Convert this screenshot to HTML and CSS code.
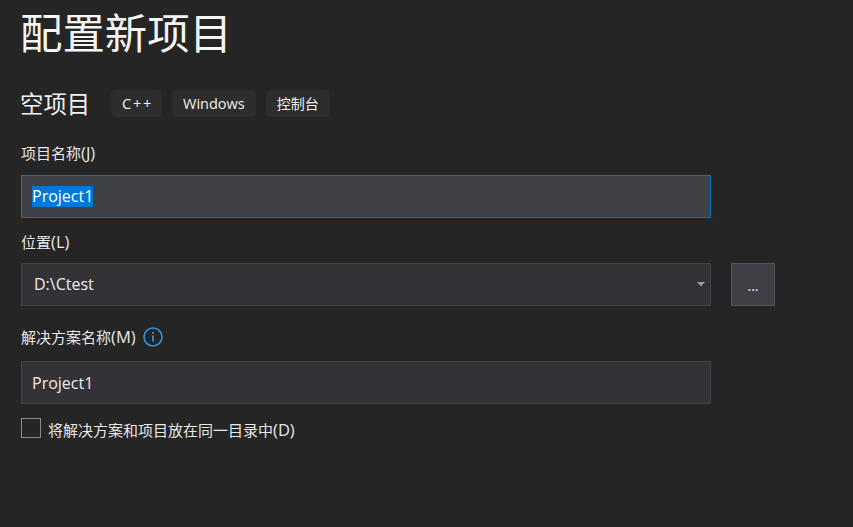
FILE: index.html
```html
<!DOCTYPE html>
<html lang="zh-CN">
<head>
<meta charset="utf-8">
<title>配置新项目</title>
<link rel="stylesheet" href="styles.css">
</head>
<body>
<main class="page">
  <h1 class="title">配置新项目</h1>
  <div class="template">
    <h2 class="template-name">空项目</h2>
    <ul class="tags">
      <li class="tag tag-cpp">C++</li>
      <li class="tag tag-latin">Windows</li>
      <li class="tag">控制台</li>
    </ul>
  </div>
  <div class="label label-name">项目名称<span class="latin">(J)</span></div>
  <div class="field field-focus"><span class="selected">Project1</span></div>
  <div class="label label-location">位置<span class="latin">(L)</span></div>
  <div class="row">
    <div class="field field-combo">
      <span>D:\Ctest</span>
      <svg class="caret" width="8" height="5" viewBox="0 0 8 5"><path d="M0 0h8L4 4.5z" fill="#999"/></svg>
    </div>
    <div class="browse">...</div>
  </div>
  <div class="label label-solution">
    <span>解决方案名称<span class="latin">(M)</span></span>
    <svg class="info" width="20" height="20" viewBox="0 0 20 20" fill="none" stroke="#3392dc">
      <circle cx="10" cy="10" r="9" stroke-width="1.6"/>
      <path d="M10 8.5v6" stroke-width="1.8"/>
      <path d="M10 5v2" stroke-width="1.8"/>
    </svg>
  </div>
  <div class="field"><span>Project1</span></div>
  <label class="check">
    <span class="box"></span>
    <span class="check-text">将解决方案和项目放在同一目录中<span class="latin">(D)</span></span>
  </label>
</main>
</body>
</html>
```
FILE: styles.css
```css
* { box-sizing: border-box; }
html, body { margin: 0; height: 100%; }
body {
  background: #252526;
  color: #f1f1f1;
  font-family: "Open Sans", "Noto Sans CJK SC", sans-serif;
  overflow: hidden;
}
.page { padding: 0 0 0 21px; width: 853px; }
.title {
  margin: 0 0 0 -1px;
  padding-top: 4px;
  height: 60px;
  font-size: 42.4px;
  line-height: 54px;
  font-weight: 400;
  font-family: "Noto Sans CJK SC", sans-serif;
  color: #f5f5f5;
}
.template {
  display: flex;
  align-items: center;
  margin-top: 30px;
  height: 27px;
}
.template-name {
  margin: 0 1px 0 -1px;
  width: 90px;
  font-size: 23.4px;
  font-weight: 400;
  line-height: 27px;
  font-family: "Noto Sans CJK SC", sans-serif;
}
.tags { display: flex; gap: 10px; margin: 0; padding: 0; list-style: none; }
.tag {
  height: 27px;
  padding: 0 11px;
  border-radius: 5px;
  background: #2d2d2e;
  font-size: 14px;
  line-height: 27px;
}
.tag-latin { font-size: 14.5px; }
.tag-cpp { font-size: 14.7px; letter-spacing: 1.7px; padding-right: 9px; width: 51px; }
.label { font-size: 15px; line-height: 20px; color: #e8e8e8; }
.latin { font-size: 16.5px; }
.label-name { margin-top: 26px; }
.label-location { margin-top: 14px; }
.label-solution { margin-top: 21px; display: flex; align-items: center; gap: 7px; }
.field {
  width: 690px;
  height: 43px;
  margin-top: 14px;
  padding: 0 10px;
  display: flex;
  align-items: center;
  background: #333337;
  border: 1px solid #434346;
  font-size: 16px;
  color: #ececec;
}
.field-focus { margin-top: 12px; background: #3f4045; border-color: #0e70c0; }
.selected { background: #0078d7; color: #fff; line-height: 21px; }
.row { display: flex; gap: 20px; margin-top: 11px; }
.field-combo { margin-top: 0; padding: 0 5px 0 12px; justify-content: space-between; }
.field-combo > span { position: relative; bottom: 1px; }
.caret { display: block; }
.browse {
  width: 44px;
  height: 43px;
  background: #3f3f46;
  border: 1px solid #555558;
  text-align: center;
  font-size: 14px;
  line-height: 44px;
}
.info { display: block; }
.check { display: flex; align-items: flex-start; gap: 7px; margin-top: 14px; font-size: 15px; color: #e8e8e8; }
.check-text { line-height: 24px; }
.box { width: 20px; height: 20px; border: 1px solid #8a8a8a; background: #252526; }
```
